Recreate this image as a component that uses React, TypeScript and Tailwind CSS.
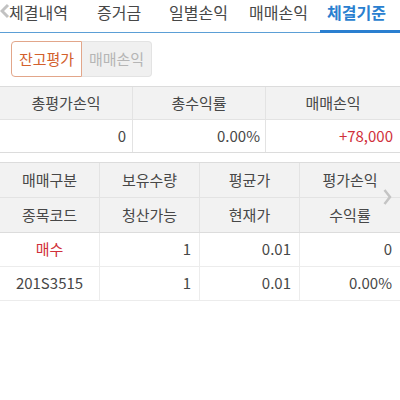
import React from "react";

const font = { fontFamily: '"Noto Sans CJK KR", "Noto Sans", sans-serif' };

export default function App() {
  return (
    <div className="w-[400px] h-[400px] bg-white text-[#474747] relative overflow-hidden" style={font}>
      {/* Tab bar */}
      <div className="relative h-[33px] flex items-start border-b border-[#5b9fd6]">
        <div className="flex w-full text-[16px] leading-[24px]">
          <div className="w-[80px] pl-[9px]">체결내역</div>
          <div className="w-[80px] pl-[17px]">증거금</div>
          <div className="w-[80px] pl-[9px]">일별손익</div>
          <div className="w-[80px] pl-[9px]">매매손익</div>
          <div className="w-[80px] pl-[7px] font-bold text-[#2a7fd0] relative">
            체결기준
            <div className="absolute left-0 right-0 top-[30px] h-[3px] bg-[#2a7fd0]" />
          </div>
        </div>
        <svg className="absolute left-[0px] top-[3px]" width="10" height="16" viewBox="0 0 10 16">
          <path d="M8 2 L2 8 L8 14" stroke="#c2c2c2" strokeWidth="3" fill="none" />
        </svg>
      </div>

      {/* Segmented buttons */}
      <div className="flex pl-[11px] pt-[8px] h-[53px]">
        <div className="w-[71px] h-[36px] flex items-center justify-center border border-[#e2a68a] rounded-l-[4px] text-[#d2602c] text-[15px] bg-white">
          잔고평가
        </div>
        <div className="w-[70px] h-[36px] flex items-center justify-center border border-l-0 border-[#e3e3e3] rounded-r-[4px] text-[#b5b5b5] text-[15px] bg-[#f0f0f0]">
          매매손익
        </div>
      </div>

      {/* Summary table */}
      <div className="border-t border-[#dcdcdc] text-[15px]">
        <div className="grid grid-cols-[133px_133px_134px] h-[33px] bg-[#f2f2f2] border-b border-[#e3e3e3]">
          <div className="flex items-center justify-center border-r border-[#e3e3e3]">총평가손익</div>
          <div className="flex items-center justify-center border-r border-[#e3e3e3]">총수익률</div>
          <div className="flex items-center justify-center">매매손익</div>
        </div>
        <div className="grid grid-cols-[133px_133px_134px] h-[33px] border-b border-[#dcdcdc]">
          <div className="flex items-center justify-end pr-[6px] border-r border-[#e3e3e3]">0</div>
          <div className="flex items-center justify-end pr-[5px] border-r border-[#e3e3e3]">0.00%</div>
          <div className="flex items-center justify-end pr-[7px] text-[#d0303a]">+78,000</div>
        </div>
      </div>

      {/* Detail table */}
      <div className="mt-[9px] border-t border-[#dcdcdc] text-[15px] relative">
        <div className="grid grid-cols-4 h-[35px] bg-[#f2f2f2] border-b border-[#e3e3e3]">
          <div className="flex items-center justify-center border-r border-[#e3e3e3]">매매구분</div>
          <div className="flex items-center justify-center border-r border-[#e3e3e3]">보유수량</div>
          <div className="flex items-center justify-center border-r border-[#e3e3e3]">평균가</div>
          <div className="flex items-center justify-center">평가손익</div>
        </div>
        <div className="grid grid-cols-4 h-[35px] bg-[#f2f2f2] border-b border-[#dcdcdc]">
          <div className="flex items-center justify-center border-r border-[#e3e3e3]">종목코드</div>
          <div className="flex items-center justify-center border-r border-[#e3e3e3]">청산가능</div>
          <div className="flex items-center justify-center border-r border-[#e3e3e3]">현재가</div>
          <div className="flex items-center justify-center">수익률</div>
        </div>
        <div className="grid grid-cols-4 h-[34px] border-b border-[#ececec]">
          <div className="flex items-center justify-center border-r border-[#ececec] text-[#d0303a]">매수</div>
          <div className="flex items-center justify-end pr-[8px] border-r border-[#ececec]">1</div>
          <div className="flex items-center justify-end pr-[8px] border-r border-[#ececec]">0.01</div>
          <div className="flex items-center justify-end pr-[8px]">0</div>
        </div>
        <div className="grid grid-cols-4 h-[34px] border-b border-[#ececec]">
          <div className="flex items-center justify-center border-r border-[#ececec]">201S3515</div>
          <div className="flex items-center justify-end pr-[8px] border-r border-[#ececec]">1</div>
          <div className="flex items-center justify-end pr-[8px] border-r border-[#ececec]">0.01</div>
          <div className="flex items-center justify-end pr-[8px]">0.00%</div>
        </div>
        <svg className="absolute right-[8px] top-[25px]" width="9" height="18" viewBox="0 0 9 18">
          <path d="M1.5 2 L7 9 L1.5 16" stroke="#c4c4c4" strokeWidth="2.5" fill="none" />
        </svg>
      </div>
    </div>
  );
}
